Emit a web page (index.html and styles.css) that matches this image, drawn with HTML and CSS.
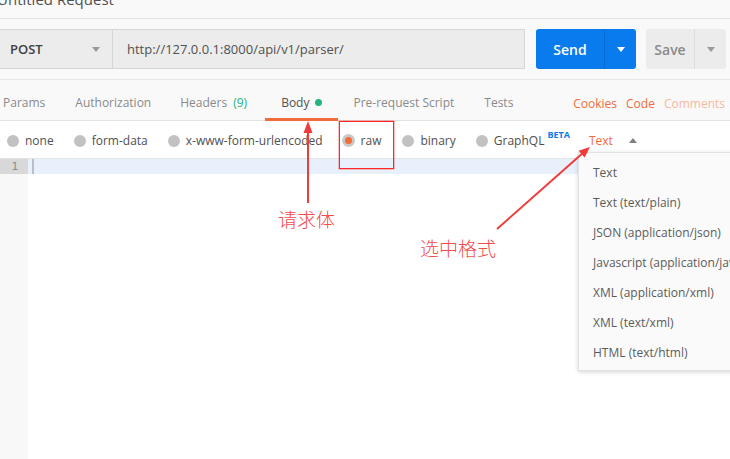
FILE: index.html
```html
<!DOCTYPE html>
<html>
<head>
<meta charset="utf-8">
<link rel="stylesheet" href="styles.css">
</head>
<body>
<div class="page">
  <div class="title"><span class="title-text">Untitled Request</span></div>
  <div class="urlbar">
    <div class="method"><span>POST</span><span class="caret"></span></div>
    <div class="url">http://127.0.0.1:8000/api/v1/parser/</div>
    <div class="send"><span class="send-main">Send</span><span class="send-arrow"><span class="caret white"></span></span></div>
    <div class="save"><span class="save-main">Save</span><span class="save-arrow"><span class="caret"></span></span></div>
  </div>
  <div class="tabs">
    <div class="tab">Params</div>
    <div class="tab">Authorization</div>
    <div class="tab tab-headers">Headers <span class="count">(9)</span></div>
    <div class="tab active">Body <span class="dot"></span></div>
    <div class="tab">Pre-request Script</div>
    <div class="tab">Tests</div>
    <div class="tab-links">
      <span class="link">Cookies</span>
      <span class="link">Code</span>
      <span class="link faded">Comments</span>
    </div>
  </div>
  <div class="options">
    <label class="opt"><span class="radio"></span>none</label>
    <label class="opt"><span class="radio"></span>form-data</label>
    <label class="opt"><span class="radio"></span>x-www-form-urlencoded</label>
    <label class="opt opt-raw"><span class="radio checked"></span>raw</label>
    <label class="opt"><span class="radio"></span>binary</label>
    <label class="opt"><span class="radio"></span>GraphQL<sup class="beta">BETA</sup></label>
    <span class="format">Text</span><span class="caret up"></span>
  </div>
  <div class="editor">
    <div class="gutter"><div class="ln active-ln">1</div></div>
    <div class="code"><div class="line active-line"><span class="cursor"></span></div></div>
  </div>

  <div class="menu">
    <div class="menu-item">Text</div>
    <div class="menu-item">Text (text/plain)</div>
    <div class="menu-item">JSON (application/json)</div>
    <div class="menu-item">Javascript (application/javascript)</div>
    <div class="menu-item">XML (application/xml)</div>
    <div class="menu-item">XML (text/xml)</div>
    <div class="menu-item">HTML (text/html)</div>
  </div>

  <div class="mark-box"></div>
  <svg class="arrows" width="730" height="459" viewBox="0 0 730 459">
    <line x1="308" y1="130" x2="308" y2="203" stroke="#f23a3a" stroke-width="2"/>
    <polygon points="308,121 303.5,133 312.5,133" fill="#f23a3a"/>
    <line x1="497" y1="229" x2="584" y2="152" stroke="#f23a3a" stroke-width="2"/>
    <polygon points="590,147 584.6,157.6 578.6,150.8" fill="#f23a3a"/>
  </svg>
  <div class="note note-body">请求体</div>
  <div class="note note-format">选中格式</div>
</div>
</body>
</html>
```
FILE: styles.css
```css
html, body {
  margin: 0;
  padding: 0;
}
body {
  font-family: "Open Sans", "Noto Sans", sans-serif;
  background: #ffffff;
  color: #505050;
}
.page {
  position: relative;
  width: 730px;
  height: 459px;
  overflow: hidden;
  display: flex;
  flex-direction: column;
}
.title {
  height: 18px;
  background: #f9f9f9;
  border-bottom: 1px solid #e3e3e3;
  overflow: hidden;
}
.title-text {
  display: block;
  margin-top: -11px;
  margin-left: -3px;
  font-size: 15px;
  line-height: 20px;
  color: #505050;
}
.urlbar {
  display: flex;
  align-items: stretch;
  height: 40px;
  padding: 10px 0;
  background: #f9f9f9;
  border-bottom: 1px solid #e6e6e6;
}
.method {
  box-sizing: border-box;
  width: 114px;
  margin-left: -1px;
  display: flex;
  align-items: center;
  justify-content: space-between;
  padding: 0 12px 0 10px;
  background: #ececec;
  border: 1px solid #d6d6d6;
  font-size: 13px;
  font-weight: 600;
  color: #404040;
}
.caret {
  display: inline-block;
  width: 0;
  height: 0;
  border-left: 4px solid transparent;
  border-right: 4px solid transparent;
  border-top: 5px solid #9a9a9a;
}
.caret.white {
  border-top-color: #ffffff;
}
.caret.up {
  border-top: none;
  border-bottom: 5px solid #808080;
  margin-left: 16px;
}
.url {
  box-sizing: border-box;
  width: 412px;
  display: flex;
  align-items: center;
  padding-left: 14px;
  background: #ececec;
  border: 1px solid #d6d6d6;
  border-left: none;
  font-size: 13px;
  color: #505050;
}
.send {
  margin-left: 11px;
  width: 100px;
  display: flex;
  background: #097bed;
  border-radius: 3px;
  color: #ffffff;
  font-size: 14px;
  font-weight: 600;
}
.send-main {
  width: 68px;
  display: flex;
  align-items: center;
  justify-content: center;
  border-right: 1px solid #0a6ad0;
}
.send-arrow {
  flex: 1;
  display: flex;
  align-items: center;
  justify-content: center;
}
.save {
  margin-left: 10px;
  width: 80px;
  display: flex;
  background: #ececec;
  border-radius: 3px;
  color: #8a8a8a;
  font-size: 14px;
  font-weight: 600;
}
.save-main {
  width: 48px;
  display: flex;
  align-items: center;
  justify-content: center;
  border-right: 1px solid #dcdcdc;
}
.save-arrow {
  flex: 1;
  display: flex;
  align-items: center;
  justify-content: center;
}
.tabs {
  height: 40px;
  display: flex;
  align-items: stretch;
  background: #f9f9f9;
  border-bottom: 1px solid #e3e3e3;
  margin-left: -12px;
  font-size: 12px;
}
.tab {
  display: flex;
  align-items: center;
  padding: 7px 15px 0;
  color: #8a8a8a;
  border-bottom: 3px solid transparent;
  margin-bottom: -1px;
}
.tab:nth-child(2) {
  padding-right: 14px;
}
.tab.tab-headers {
  padding-right: 18px;
}
.tab.active {
  color: #505050;
  border-bottom-color: #f26b3a;
  padding-left: 16px;
  padding-right: 16px;
}
.count {
  color: #26b47f;
  margin-left: 6px;
}
.dot {
  display: inline-block;
  width: 7px;
  height: 7px;
  border-radius: 50%;
  background: #26b47f;
  margin-left: 6px;
}
.tab-links {
  margin-left: auto;
  display: flex;
  align-items: center;
  gap: 9px;
  padding-right: 5px;
  padding-top: 7px;
}
.link {
  color: #f26b3a;
}
.link.faded {
  color: #f7b8a0;
}
.options {
  display: flex;
  align-items: center;
  padding-left: 7px;
  padding-top: 2px;
  box-sizing: border-box;
  height: 38px;
  background: #ffffff;
  border-bottom: 1px solid #e3e3e3;
  font-size: 12px;
  color: #505050;
}
.opt {
  display: flex;
  align-items: center;
  margin-right: 20px;
}
.opt.opt-raw {
  margin-right: 21px;
}
.radio {
  box-sizing: border-box;
  width: 12px;
  height: 12px;
  border-radius: 50%;
  background: #c2c2c2;
  margin-right: 6px;
}
.radio.checked {
  background: #f26b3a;
  border: 3px solid #c8c8c8;
  width: 13px;
  height: 13px;
  margin-left: -1px;
  margin-right: 6px;
}
.beta {
  font-size: 9px;
  font-weight: 700;
  color: #097bed;
  margin-left: 3px;
  align-self: flex-start;
  margin-top: -4px;
}
.format {
  color: #f26b3a;
  margin-left: -1px;
}
.editor {
  flex: 1;
  display: flex;
}
.gutter {
  width: 28px;
  background: #f8f8f8;
}
.ln {
  height: 15px;
  font-family: "DejaVu Sans Mono", monospace;
  font-size: 11px;
  line-height: 15px;
  color: #8c8c8c;
  text-align: right;
  padding-right: 10px;
}
.ln.active-ln {
  background: #d8d8d8;
}
.code {
  flex: 1;
}
.line {
  height: 15px;
}
.active-line {
  background: #e8f1fb;
  display: flex;
}
.cursor {
  width: 2px;
  height: 15px;
  margin-left: 4px;
  background: #b7c0c9;
}
.menu {
  position: absolute;
  left: 578px;
  top: 152px;
  width: 180px;
  height: 219px;
  box-sizing: border-box;
  padding-top: 5px;
  background: #fafafa;
  border: 1px solid #e2e2e2;
  box-shadow: 0 1px 4px rgba(0, 0, 0, 0.18);
  font-size: 12px;
  color: #5a5a5a;
  white-space: nowrap;
}
.menu-item {
  height: 30px;
  line-height: 30px;
  padding-left: 14px;
}
.mark-box {
  position: absolute;
  left: 339px;
  top: 121px;
  width: 55px;
  height: 48px;
  box-sizing: border-box;
  border: 1px solid #ff2828;
  box-shadow: 0 0 0 0.5px rgba(255, 40, 40, 0.6);
}
.arrows {
  position: absolute;
  left: 0;
  top: 0;
}
.note {
  position: absolute;
  font-family: "Noto Sans CJK SC", sans-serif;
  font-size: 19px;
  line-height: 19px;
  color: #f24c4c;
  font-weight: 300;
}
.note-body {
  left: 278px;
  top: 209px;
}
.note-format {
  left: 420px;
  top: 238px;
}
```
